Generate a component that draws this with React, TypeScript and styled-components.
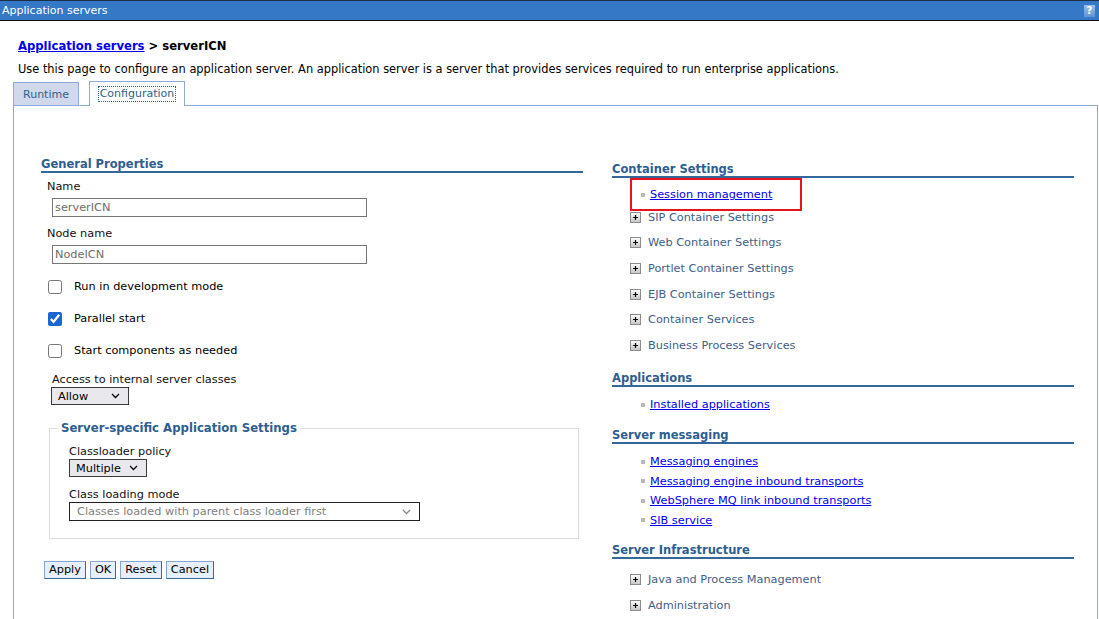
import React from 'react';
import styled, { createGlobalStyle } from 'styled-components';

const GlobalStyle = createGlobalStyle`
  html, body { margin: 0; padding: 0; background: #fff; }
  body {
    font-family: "DejaVu Sans", Verdana, sans-serif;
    font-size: 11.3px;
    color: #000;
    overflow: hidden;
  }
  * { box-sizing: border-box; }
`;

const Page = styled.div`
  width: 1099px;
  height: 619px;
  overflow: hidden;
  display: flex;
  flex-direction: column;
`;

const TitleBar = styled.div`
  height: 21px;
  flex: none;
  background: #3478c6;
  border-top: 1px solid #1d2e44;
  border-bottom: 1px solid #0e0e0e;
  display: flex;
  align-items: center;
  justify-content: space-between;
  padding: 0 4px 0 2px;
  color: #fff;
  font-size: 11px;
`;

const HelpIcon = styled.span`
  width: 11px;
  height: 12px;
  background: linear-gradient(#9cc0ea, #5f93d2);
  color: #fff;
  font-weight: bold;
  font-size: 10px;
  line-height: 12px;
  text-align: center;
`;

const Header = styled.div`
  padding: 17px 18px 0;
  flex: none;
`;

const Breadcrumb = styled.div`
  font-weight: bold;
  font-size: 11.6px;
  line-height: 16px;
`;

const Link = styled.a`
  color: #0000ee;
  text-decoration: underline;
  cursor: pointer;
`;

const Description = styled.div`
  margin-top: 8px;
  line-height: 14px;
  font-size: 11.4px;
`;

const TabRow = styled.div`
  display: flex;
  align-items: flex-end;
  gap: 10px;
  margin: 5px 0 0 13px;
  flex: none;
  position: relative;
  z-index: 1;
`;

const Tab = styled.div<{ $active?: boolean; $width: number }>`
  width: ${(p) => p.$width}px;
  height: ${(p) => (p.$active ? 25 : 23)}px;
  margin-bottom: ${(p) => (p.$active ? -1 : 0)}px;
  border: 1px solid #8eaadb;
  border-bottom: none;
  background: ${(p) => (p.$active ? '#fff' : '#cfd9eb')};
  color: #2e5f8e;
  font-size: 11px;
  display: flex;
  align-items: center;
  justify-content: center;
`;

const FocusRing = styled.span`
  outline: 1px dotted #2e5f8e;
  padding: 0 1px;
  line-height: 14px;
`;

const Panel = styled.div`
  flex: 1;
  margin: 0 1px 0 13px;
  border: 1px solid #8eaadb;
  border-bottom: none;
  display: grid;
  grid-template-columns: 542px 462px;
  column-gap: 29px;
  padding-left: 27px;
  align-items: start;
`;

const LeftColumn = styled.div`
  padding-top: 52px;
  display: flex;
  flex-direction: column;
  align-items: flex-start;
`;

const RightColumn = styled.div`
  padding-top: 57px;
  display: flex;
  flex-direction: column;
`;

const SectionHeading = styled.div<{ $mt?: number }>`
  align-self: stretch;
  margin-top: ${(p) => p.$mt ?? 0}px;
  font-weight: bold;
  font-size: 11.5px;
  line-height: 13px;
  color: #2d5e91;
  border-bottom: 2px solid #34689c;
`;

const Label = styled.div<{ $mt: number; $indent: number }>`
  margin: ${(p) => p.$mt}px 0 0 ${(p) => p.$indent}px;
  line-height: 14px;
  color: #111;
`;

const TextInput = styled.div`
  margin: 4px 0 0 11px;
  width: 315px;
  height: 19px;
  border: 1px solid #767676;
  color: #6d6d6d;
  padding-left: 2px;
  line-height: 17px;
`;

const CheckRow = styled.label<{ $first?: boolean }>`
  margin: ${(p) => (p.$first ? 7 : 0)}px 0 0 7px;
  height: 32px;
  display: flex;
  align-items: center;
  gap: 12px;
  line-height: 14px;
`;

const CheckBox = styled.input`
  margin: 0;
  width: 14px;
  height: 14px;
  accent-color: #1a66d2;
`;

const SelectBox = styled.div<{ $width: number; $height: number; $disabled?: boolean; $indent?: number }>`
  margin-left: ${(p) => p.$indent ?? 0}px;
  width: ${(p) => p.$width}px;
  height: ${(p) => p.$height}px;
  border: 1px solid ${(p) => (p.$disabled ? '#222' : '#3a3a3a')};
  background: ${(p) => (p.$disabled ? '#fff' : '#e9e9ed')};
  color: ${(p) => (p.$disabled ? '#808080' : '#000')};
  display: flex;
  align-items: center;
  justify-content: space-between;
  padding: 0 8px 0 ${(p) => (p.$disabled ? 7 : 6)}px;
  font-size: 11.3px;
`;

const Fieldset = styled.fieldset`
  margin: 15px 0 0 8px;
  width: 530px;
  border: 1px solid #dcdcdc;
  padding: 9px 0 17px 19px;
  display: flex;
  flex-direction: column;
  align-items: flex-start;
`;

const Legend = styled.legend`
  margin-left: -12px;
  padding: 0 3px 0 4px;
  font-weight: bold;
  font-size: 11.7px;
  line-height: 16px;
  color: #2d5e91;
`;

const FieldLabel = styled.div<{ $mt: number }>`
  margin-top: ${(p) => p.$mt}px;
  line-height: 14px;
  color: #111;
`;

const ButtonRow = styled.div`
  margin: 22px 0 0 3px;
  display: flex;
  gap: 4px;
`;

const Button = styled.button`
  font-family: "DejaVu Sans", Verdana, sans-serif;
  font-size: 11.3px;
  height: 18px;
  padding: 0 4px;
  background: #e7effa;
  color: #000;
  border: 1px solid;
  border-color: #86a5d2 #3d6699 #3d6699 #86a5d2;
  line-height: 14px;
`;

const LinkList = styled.ul<{ $mt: number }>`
  list-style: none;
  margin: ${(p) => p.$mt}px 0 0;
  padding: 0 0 0 29px;
`;

const LinkItem = styled.li`
  height: 19.6px;
  display: flex;
  align-items: center;
  gap: 5px;
  position: relative;
`;

const Bullet = styled.span`
  width: 4px;
  height: 4px;
  background: #b8b8b8;
  flex: none;
`;

const Highlight = styled.span`
  position: absolute;
  left: -11px;
  top: -7px;
  width: 172px;
  height: 33px;
  border: 2px solid #e8141c;
  pointer-events: none;
`;

const ExpandList = styled.ul<{ $mt: number }>`
  list-style: none;
  margin: ${(p) => p.$mt}px 0 0;
  padding: 0 0 0 18px;
`;

const ExpandItem = styled.li`
  height: 25.6px;
  display: flex;
  align-items: center;
  gap: 7px;
  color: #3e6088;
`;

const PlusIcon = () => (
  <svg width="11" height="11" viewBox="0 0 11 11" style={{ flex: 'none' }}>
    <defs>
      <linearGradient id="pg" x1="0" y1="0" x2="0" y2="1">
        <stop offset="0" stopColor="#ffffff" />
        <stop offset="1" stopColor="#c4c4c4" />
      </linearGradient>
    </defs>
    <rect x="0.5" y="0.5" width="10" height="10" fill="url(#pg)" stroke="#8c8c8c" />
    <path d="M3 5.5h5M5.5 3v5" stroke="#000" strokeWidth="1.2" />
  </svg>
);

const Chevron = ({ color = '#000' }: { color?: string }) => (
  <svg width="9" height="6" viewBox="0 0 9 6">
    <path d="M1 1l3.5 3.5L8 1" fill="none" stroke={color} strokeWidth="1.3" />
  </svg>
);

const containerSettings = [
  'SIP Container Settings',
  'Web Container Settings',
  'Portlet Container Settings',
  'EJB Container Settings',
  'Container Services',
  'Business Process Services',
];

const messagingLinks = [
  'Messaging engines',
  'Messaging engine inbound transports',
  'WebSphere MQ link inbound transports',
  'SIB service',
];

export default function App() {
  return (
    <Page>
      <GlobalStyle />
      <TitleBar>
        <span>Application servers</span>
        <HelpIcon>?</HelpIcon>
      </TitleBar>
      <Header>
        <Breadcrumb>
          <Link>Application servers</Link> &gt; serverICN
        </Breadcrumb>
        <Description>
          Use this page to configure an application server. An application server is a server that provides services
          required to run enterprise applications.
        </Description>
      </Header>
      <TabRow>
        <Tab $width={66}>Runtime</Tab>
        <Tab $active $width={96}>
          <FocusRing>Configuration</FocusRing>
        </Tab>
      </TabRow>
      <Panel>
        <LeftColumn>
          <SectionHeading>General Properties</SectionHeading>
          <Label $mt={7} $indent={6}>Name</Label>
          <TextInput>serverICN</TextInput>
          <Label $mt={10} $indent={6}>Node name</Label>
          <TextInput>NodeICN</TextInput>
          <CheckRow $first>
            <CheckBox type="checkbox" />
            Run in development mode
          </CheckRow>
          <CheckRow>
            <CheckBox type="checkbox" defaultChecked />
            Parallel start
          </CheckRow>
          <CheckRow>
            <CheckBox type="checkbox" />
            Start components as needed
          </CheckRow>
          <Label $mt={6} $indent={11}>Access to internal server classes</Label>
          <SelectBox $width={78} $height={18} $indent={10}>
            <span>Allow</span>
            <Chevron />
          </SelectBox>
          <Fieldset>
            <Legend>Server-specific Application Settings</Legend>
            <FieldLabel $mt={0}>Classloader policy</FieldLabel>
            <SelectBox $width={78} $height={18}>
              <span>Multiple</span>
              <Chevron />
            </SelectBox>
            <FieldLabel $mt={11}>Class loading mode</FieldLabel>
            <SelectBox $width={351} $height={19} $disabled>
              <span>Classes loaded with parent class loader first</span>
              <Chevron color="#8a8a8a" />
            </SelectBox>
          </Fieldset>
          <ButtonRow>
            <Button>Apply</Button>
            <Button>OK</Button>
            <Button>Reset</Button>
            <Button>Cancel</Button>
          </ButtonRow>
        </LeftColumn>
        <RightColumn>
          <SectionHeading>Container Settings</SectionHeading>
          <LinkList $mt={7}>
            <LinkItem>
              <Highlight />
              <Bullet />
              <Link>Session management</Link>
            </LinkItem>
          </LinkList>
          <ExpandList $mt={0}>
            {containerSettings.map((t) => (
              <ExpandItem key={t}>
                <PlusIcon />
                {t}
              </ExpandItem>
            ))}
          </ExpandList>
          <SectionHeading $mt={14}>Applications</SectionHeading>
          <LinkList $mt={8}>
            <LinkItem>
              <Bullet />
              <Link>Installed applications</Link>
            </LinkItem>
          </LinkList>
          <SectionHeading $mt={14}>Server messaging</SectionHeading>
          <LinkList $mt={8}>
            {messagingLinks.map((t) => (
              <LinkItem key={t}>
                <Bullet />
                <Link>{t}</Link>
              </LinkItem>
            ))}
          </LinkList>
          <SectionHeading $mt={14}>Server Infrastructure</SectionHeading>
          <ExpandList $mt={8}>
            <ExpandItem>
              <PlusIcon />
              Java and Process Management
            </ExpandItem>
            <ExpandItem>
              <PlusIcon />
              Administration
            </ExpandItem>
          </ExpandList>
        </RightColumn>
      </Panel>
    </Page>
  );
}
